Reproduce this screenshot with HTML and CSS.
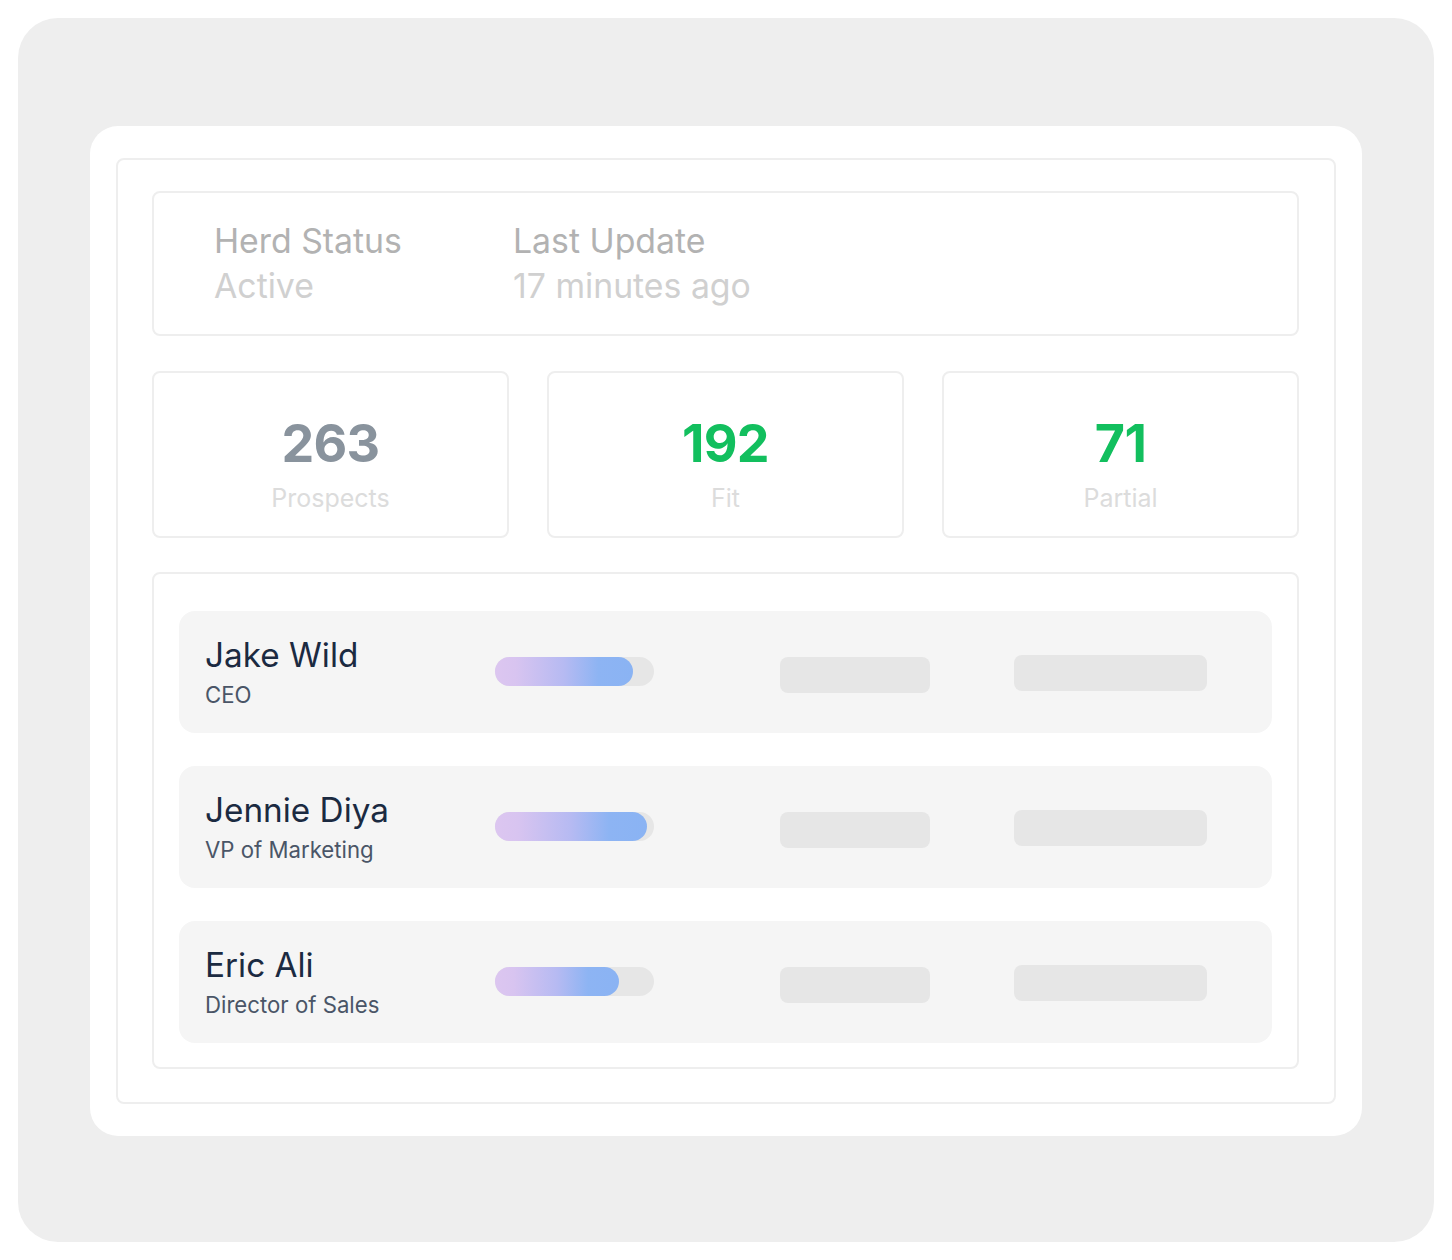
FILE: index.html
```html
<!DOCTYPE html>
<html lang="en">
<head>
<meta charset="utf-8">
<title>Herd Status</title>
<link rel="stylesheet" href="styles.css">
</head>
<body>
<div class="panel">
  <div class="card">
    <div class="frame">
      <div class="status">
        <div class="status-col first">
          <div class="status-label">Herd Status</div>
          <div class="status-value">Active</div>
        </div>
        <div class="status-col">
          <div class="status-label">Last Update</div>
          <div class="status-value">17 minutes ago</div>
        </div>
      </div>
      <div class="stats">
        <div class="stat">
          <div class="stat-num gray">263</div>
          <div class="stat-label">Prospects</div>
        </div>
        <div class="stat">
          <div class="stat-num green">192</div>
          <div class="stat-label">Fit</div>
        </div>
        <div class="stat">
          <div class="stat-num green">71</div>
          <div class="stat-label">Partial</div>
        </div>
      </div>
      <div class="list">
        <div class="row">
          <div class="person">
            <div class="name">Jake Wild</div>
            <div class="role">CEO</div>
          </div>
          <div class="track"><div class="fill" style="width:138px"></div></div>
          <div class="ph ph-a"></div>
          <div class="ph ph-b"></div>
        </div>
        <div class="row">
          <div class="person">
            <div class="name">Jennie Diya</div>
            <div class="role">VP of Marketing</div>
          </div>
          <div class="track"><div class="fill" style="width:152px"></div></div>
          <div class="ph ph-a"></div>
          <div class="ph ph-b"></div>
        </div>
        <div class="row">
          <div class="person">
            <div class="name">Eric Ali</div>
            <div class="role">Director of Sales</div>
          </div>
          <div class="track"><div class="fill" style="width:124px"></div></div>
          <div class="ph ph-a"></div>
          <div class="ph ph-b"></div>
        </div>
      </div>
    </div>
  </div>
</div>
</body>
</html>
```

FILE: styles.css
```css
* { box-sizing: border-box; }
html, body { margin: 0; padding: 0; background: #ffffff; }
body {
  font-family: Inter, "Noto Sans", "Liberation Sans", sans-serif;
  padding: 18px;
}
.panel {
  width: 1416px;
  height: 1224px;
  background: #eeeeee;
  border-radius: 40px;
  padding: 108px 72px 0 72px;
}
.card {
  width: 1272px;
  height: 1010px;
  background: #ffffff;
  border-radius: 28px;
  padding: 32px 26px;
}
.frame {
  width: 1220px;
  height: 946px;
  border: 2px solid #eeeeee;
  border-radius: 8px;
  padding: 31px 35px 0 34px;
  display: flex;
  flex-direction: column;
}
.status {
  height: 145px;
  border: 2px solid #eeeeee;
  border-radius: 8px;
  padding: 25px 58px 0 60px;
  display: flex;
}
.status-col.first { width: 299px; }
.status-label, .status-value {
  font-size: 33.8px;
  line-height: 45px;
}
.status-label { color: #b2b2b2; }
.status-value { color: #d0d0d0; }
.stats {
  margin-top: 35px;
  display: grid;
  grid-template-columns: repeat(3, 357px);
  justify-content: space-between;
}
.stat {
  height: 167px;
  border: 2px solid #eeeeee;
  border-radius: 8px;
  padding-top: 43px;
  display: flex;
  flex-direction: column;
  align-items: center;
}
.stat-num {
  font-size: 52px;
  line-height: 56px;
  font-weight: 700;
  letter-spacing: -0.7px;
}
.stat-num.gray { color: #89939d; }
.stat-num.green { color: #12bf5e; }
.stat-label {
  margin-top: 10px;
  font-size: 25px;
  line-height: 32px;
  color: #dcdcdc;
}
.list {
  margin-top: 34px;
  height: 497px;
  border: 2px solid #eeeeee;
  border-radius: 8px;
  padding: 37px 25px 0 25px;
  display: flex;
  flex-direction: column;
  gap: 33px;
}
.row {
  height: 122px;
  background: #f5f5f5;
  border-radius: 16px;
  padding-left: 26px;
  display: grid;
  grid-template-columns: 290px 285px 234px 193px;
  align-items: center;
}
.name {
  font-size: 33.3px;
  line-height: 40px;
  color: #1b2a41;
}
.role {
  font-size: 22.2px;
  line-height: 30px;
  color: #4a5567;
  margin-top: 5px;
}
.track {
  width: 159px;
  height: 29px;
  border-radius: 15px;
  background: #e6e6e6;
  margin-top: -1px;
}
.fill {
  height: 29px;
  border-radius: 15px;
  background: linear-gradient(90deg, #dcc6f0 0%, #d8c4f0 15%, #b6baf2 50%, #8db4f3 75%, #8ab3f3 100%);
}
.ph {
  height: 36px;
  border-radius: 8px;
  background: #e6e6e6;
}
.ph-a { width: 150px; margin-top: 6px; }
.ph-b { width: 193px; margin-top: 2px; }
```
